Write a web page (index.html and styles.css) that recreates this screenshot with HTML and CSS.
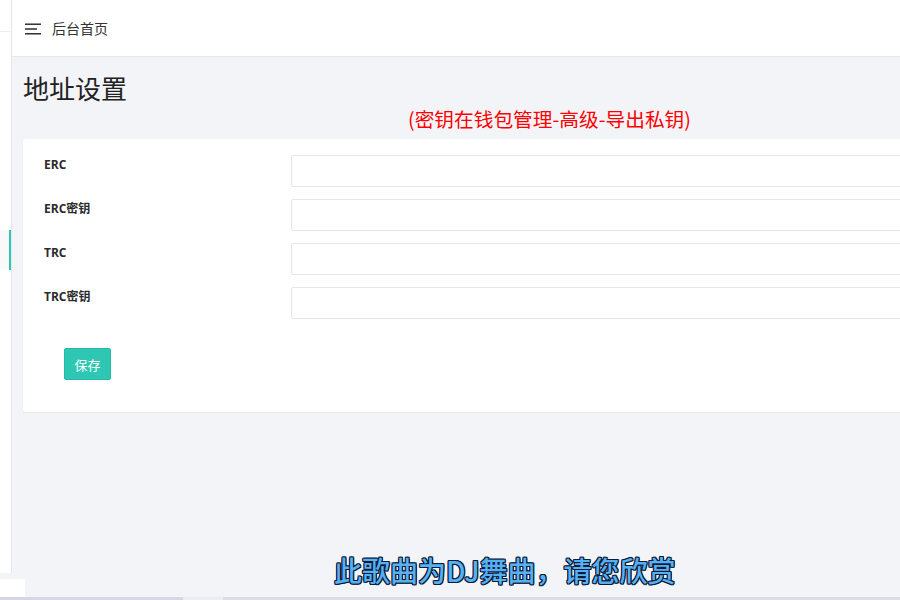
FILE: index.html
```html
<!DOCTYPE html>
<html lang="zh-CN">
<head>
<meta charset="utf-8">
<title>地址设置</title>
<link rel="stylesheet" href="styles.css">
</head>
<body>
<div class="app">
  <aside class="sidebar">
    <div class="side-top"></div>
    <div class="side-space"></div>
    <div class="side-item active"></div>
  </aside>
  <div class="main">
    <header class="topbar">
      <svg class="menu-icon" width="16" height="12" viewBox="0 0 16 12" aria-hidden="true">
        <rect x="0" y="0.5" width="16" height="1.4" fill="#222"/>
        <rect x="0" y="5.3" width="12" height="1.4" fill="#222"/>
        <rect x="0" y="10.1" width="16" height="1.4" fill="#222"/>
      </svg>
      <span class="crumb">后台首页</span>
    </header>
    <section class="content">
      <h1 class="page-title">地址设置</h1>
      <p class="hint">(密钥在钱包管理-高级-导出私钥)</p>
      <form class="card">
        <div class="row"><label class="label">ERC</label><input class="field" type="text"></div>
        <div class="row"><label class="label">ERC密钥</label><input class="field" type="text"></div>
        <div class="row"><label class="label">TRC</label><input class="field" type="text"></div>
        <div class="row"><label class="label">TRC密钥</label><input class="field" type="text"></div>
        <div class="actions"><button type="button" class="btn">保存</button></div>
      </form>
    </section>
  </div>
</div>
<div class="float-box"></div>
<div class="subtitle">此歌曲为DJ舞曲，请您欣赏</div>
<div class="bottombar"><span class="seg dark"></span><span class="seg light"></span><span class="seg rest"></span></div>
</body>
</html>
```
FILE: styles.css
```css
html, body {
  margin: 0;
  padding: 0;
  width: 900px;
  height: 600px;
  overflow: hidden;
  background: #f3f4f8;
  font-family: "Open Sans", "Noto Sans CJK SC", sans-serif;
  color: #333;
}
.app {
  display: flex;
  height: 597px;
}
.sidebar {
  flex: none;
  width: 11px;
  height: 573px;
  background: #fff;
  border-right: 1px solid #e6e7ee;
  display: flex;
  flex-direction: column;
}
.side-top {
  height: 31px;
  border-bottom: 1px solid #eeeeee;
}
.side-space {
  height: 198px;
}
.side-item {
  height: 40px;
}
.side-item.active {
  background: #f9f9f9;
  border-right: 2px solid #2ec7b4;
}
.main {
  flex: 1;
  min-width: 0;
  overflow: hidden;
  display: flex;
  flex-direction: column;
}
.topbar {
  height: 56px;
  flex: none;
  background: #fff;
  border-bottom: 1px solid #e8e9ee;
  display: flex;
  align-items: center;
  padding-left: 13px;
  box-sizing: content-box;
}
.menu-icon {
  display: block;
  margin-right: 11px;
  margin-top: 1px;
}
.crumb {
  font-family: "Noto Sans CJK SC", sans-serif;
  font-size: 14px;
  color: #333;
}
.content {
  padding: 0 0 0 11px;
}
.page-title {
  margin: 13px 0 0 0;
  font-family: "Noto Sans CJK SC", sans-serif;
  font-weight: 400;
  font-size: 26px;
  line-height: 36px;
  color: #222;
}
.hint {
  margin: 0;
  padding-left: 385px;
  font-family: "Noto Sans CJK SC", sans-serif;
  font-size: 19.7px;
  line-height: 25px;
  color: #ff0000;
}
.card {
  margin: 8px 0 0 0;
  width: 1100px;
  background: #fff;
  border-radius: 3px;
  box-shadow: 0 1px 2px rgba(0, 0, 0, 0.06);
  padding: 16px 0 32px 21px;
  display: flex;
  flex-direction: column;
  gap: 12px;
}
.row {
  display: flex;
  align-items: flex-start;
}
.label {
  width: 247px;
  flex: none;
  font-size: 12px;
  font-weight: 700;
  line-height: 20px;
  color: #2b2b2b;
}
.field {
  flex: 1;
  height: 32px;
  box-sizing: border-box;
  border: 1px solid #e6e6e6;
  border-radius: 2px;
  background: #fff;
  padding: 0 10px;
  outline: none;
}
.actions {
  margin-top: 17px;
  padding-left: 20px;
}
.btn {
  width: 47px;
  height: 32px;
  border: 1px solid #27b9a7;
  border-radius: 2px;
  background: #2ec7b4;
  color: #fff;
  font-family: "Noto Sans CJK SC", sans-serif;
  font-size: 13px;
  padding: 0;
  cursor: pointer;
}
.float-box {
  position: absolute;
  left: 0;
  top: 579px;
  width: 25px;
  height: 18px;
  background: #fff;
}
.subtitle {
  position: absolute;
  left: 334px;
  top: 550px;
  font-family: "Noto Sans CJK SC", sans-serif;
  font-weight: 500;
  font-size: 28px;
  line-height: 40px;
  letter-spacing: 0;
  color: #56b0f4;
  text-shadow: 1px 0 0 #0c1a33, -1px 0 0 #0c1a33, 0 1px 0 #0c1a33, 0 -1px 0 #0c1a33, 1px 1px 0 #0c1a33, -1px -1px 0 #0c1a33, 1px -1px 0 #0c1a33, -1px 1px 0 #0c1a33;
}
.bottombar {
  display: flex;
  height: 3px;
}
.seg { display: block; height: 3px; }
.seg.dark { width: 183px; background: #d7d6e4; }
.seg.light { width: 40px; background: #ecedf2; }
.seg.rest { flex: 1; background: #dcdce6; }
```
